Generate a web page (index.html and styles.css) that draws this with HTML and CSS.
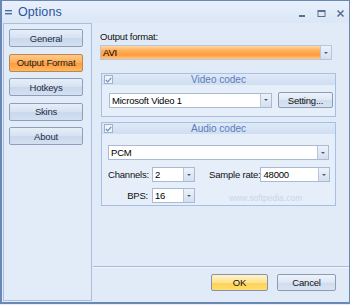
FILE: index.html
```html
<!DOCTYPE html>
<html lang='en'>

<head>
  <meta charset='utf-8'>
  <title>Options</title>
  <link rel="stylesheet" href="styles.css">
</head>

<body>
  <div class="window">
    <div class="titlebar">
      <svg class="sys-icon" width="8" height="7" viewBox="0 0 8 7">
        <rect x="0" y="1" width="7" height="1.4" fill="#4c6da5"/>
        <rect x="0" y="4" width="7" height="1.4" fill="#4c6da5"/>
      </svg>
      <span class="title">Options</span>
      <div class="controls">
        <svg width="9" height="9" viewBox="0 0 9 9"><rect x="1" y="6" width="6" height="2" fill="#5b6f90"/></svg>
        <svg width="9" height="9" viewBox="0 0 9 9"><rect x="1" y="1.5" width="7" height="6" fill="none" stroke="#5b6f90" stroke-width="1"/><rect x="1" y="1" width="7" height="2" fill="#5b6f90"/></svg>
        <svg width="9" height="9" viewBox="0 0 9 9"><path d="M1.5 1.5 L7.5 7.5 M7.5 1.5 L1.5 7.5" stroke="#5b6f90" stroke-width="1.6"/></svg>
      </div>
    </div>
    <div class="main">
      <div class="sidebar">
        <div class="side-btn">General</div>
        <div class="side-btn active">Output Format</div>
        <div class="side-btn">Hotkeys</div>
        <div class="side-btn">Skins</div>
        <div class="side-btn">About</div>
      </div>
      <div class="content">
        <div class="label top-label">Output format:</div>
        <div class="combo combo-orange format-combo">
          <span class="combo-text">AVI</span>
          <span class="drop"><i></i></span>
        </div>

        <div class="group video-group">
          <div class="group-head">
            <span class="check"><svg width="7" height="6" viewBox="0 0 7 6"><path d="M0.8 3 L2.7 4.9 L6.3 0.8" fill="none" stroke="#6f8fbf" stroke-width="1.2"/></svg></span>
            <span>Video codec</span>
          </div>
          <div class="group-body video-body">
            <div class="combo video-combo">
              <span class="combo-text">Microsoft Video 1</span>
              <span class="drop"><i></i></span>
            </div>
            <div class="btn setting-btn">Setting...</div>
          </div>
        </div>

        <div class="group audio-group">
          <div class="group-head">
            <span class="check"><svg width="7" height="6" viewBox="0 0 7 6"><path d="M0.8 3 L2.7 4.9 L6.3 0.8" fill="none" stroke="#6f8fbf" stroke-width="1.2"/></svg></span>
            <span>Audio codec</span>
          </div>
          <div class="group-body audio-body">
            <div class="combo pcm-combo">
              <span class="combo-text">PCM</span>
              <span class="drop"><i></i></span>
            </div>
            <div class="audio-row">
              <span class="label row-label">Channels:</span>
              <div class="combo small-combo">
                <span class="combo-text">2</span>
                <span class="drop"><i></i></span>
              </div>
              <span class="label rate-label">Sample rate:</span>
              <div class="combo rate-combo">
                <span class="combo-text">48000</span>
                <span class="drop"><i></i></span>
              </div>
            </div>
            <div class="audio-row bps-row">
              <span class="label row-label">BPS:</span>
              <div class="combo small-combo">
                <span class="combo-text">16</span>
                <span class="drop"><i></i></span>
              </div>
            </div>
          </div>
          <span class="watermark">www.softpedia.com</span>
        </div>

        <div class="spacer"></div>
        <div class="footer">
          <div class="btn ok-btn">OK</div>
          <div class="btn cancel-btn">Cancel</div>
        </div>
      </div>
    </div>
  </div>
</body>

</html>
```

FILE: styles.css
```css
* {
  margin: 0;
  padding: 0;
  box-sizing: border-box;
}

html,
body {
  width: 350px;
  height: 305px;
  background-color: #e6eef9;
  font-family: "Liberation Sans", Arial, sans-serif;
  font-size: 9.5px;
  color: #000;
  overflow: hidden;
}

.window {
  width: 350px;
  height: 304px;
  border: 1px solid #6a88b6;
  border-left-width: 2px;
  border-bottom-width: 2px;
  background-color: #e1ebf8;
  display: flex;
  flex-direction: column;
}

.titlebar {
  height: 22px;
  display: flex;
  align-items: center;
  padding-left: 3px;
  background: linear-gradient(#e8f0fb, #dbe7f6);
}

.sys-icon {
  margin-top: 1px;
}

.title {
  margin-left: 5px;
  font-size: 12.5px;
  color: #2b54a0;
  letter-spacing: 0.1px;
}

.controls {
  margin-left: auto;
  display: flex;
  gap: 10px;
  padding-right: 4px;
  margin-top: 2px;
}

.main {
  flex: 1;
  display: flex;
}

.sidebar {
  width: 89px;
  margin-left: 1px;
  margin-bottom: 1px;
  border: 1px solid #a9bfdd;
  background-color: #e2ecf9;
  padding: 5px 0 0 5px;
  display: flex;
  flex-direction: column;
  gap: 6.5px;
}

.side-btn {
  width: 74px;
  height: 18px;
  border: 1px solid #8d9fbb;
  border-radius: 2px;
  background: linear-gradient(#e7eef8, #d6e2f2 50%, #c9d8ec 51%, #d3e0f1);
  display: flex;
  align-items: center;
  justify-content: center;
  color: #1d2b44;
  letter-spacing: -0.2px;
  white-space: nowrap;
}

.side-btn.active {
  border-color: #b98a4e;
  background: linear-gradient(#ffc98a, #ffac55 50%, #ff9a38 51%, #ffb865);
  color: #202020;
}

.content {
  flex: 1;
  display: flex;
  flex-direction: column;
  padding: 0 0 0 8px;
}

.label {
  color: #111;
  letter-spacing: -0.2px;
  white-space: nowrap;
  flex-shrink: 0;
}

.top-label {
  margin-top: 8px;
  line-height: 12px;
}

.combo {
  height: 15px;
  border: 1px solid #a9bad3;
  background-color: #fff;
  display: flex;
  align-items: center;
  padding-left: 2px;
  letter-spacing: -0.2px;
  flex-shrink: 0;
}

.combo-text {
  flex: 1;
  white-space: nowrap;
}

.drop {
  width: 11px;
  height: 13px;
  border-left: 1px solid #b8c7dc;
  background: linear-gradient(#edf2fa, #d4dfee);
  display: flex;
  align-items: center;
  justify-content: center;
}

.drop i {
  width: 0;
  height: 0;
  border-left: 2.5px solid transparent;
  border-right: 2.5px solid transparent;
  border-top: 2.5px solid #4b5d7c;
}

.format-combo {
  margin-top: 2px;
  width: 232px;
  height: 15px;
}

.combo-orange {
  background: linear-gradient(#ffd8a6, #ffae5c 35%, #ff9c3c 70%, #ffc68a);
  border-color: #b9c6d8;
}

.group {
  position: relative;
  width: 235px;
  margin-left: 1px;
  border: 1px solid #a6bfe2;
  background-color: #e6eefa;
}

.video-group {
  margin-top: 13px;
  height: 44px;
}

.audio-group {
  margin-top: 5px;
  height: 84px;
}

.group-head {
  height: 11px;
  display: flex;
  align-items: center;
  justify-content: center;
  position: relative;
  background: linear-gradient(#dfe9f7, #cfdef2);
  color: #5a7cba;
  font-size: 10px;
}

.check {
  position: absolute;
  left: 2px;
  top: 1px;
  width: 9px;
  height: 9px;
  border: 1px solid #9fb3d0;
  background-color: #eef3fa;
  display: flex;
  align-items: center;
  justify-content: center;
}

.video-body {
  display: flex;
  align-items: center;
  padding: 7px 0 0 7px;
}

.video-combo {
  width: 163px;
}

.btn {
  height: 16px;
  border: 1px solid #8d9cb4;
  border-radius: 2px;
  background: linear-gradient(#eef3fa, #dde7f4 50%, #cfdcee 51%, #d9e4f2);
  display: flex;
  align-items: center;
  justify-content: center;
  letter-spacing: -0.2px;
  color: #111;
}

.setting-btn {
  width: 55px;
  margin-left: 6px;
}

.audio-body {
  padding: 11px 6px 0 6px;
}

.pcm-combo {
  width: 221px;
}

.audio-row {
  display: flex;
  align-items: center;
  margin-top: 7px;
}

.bps-row {
  margin-top: 6px;
}

.row-label {
  width: 40px;
  text-align: right;
}

.small-combo {
  width: 43px;
  margin-left: 4px;
}

.rate-label {
  margin-left: 14px;
}

.rate-combo {
  width: 70px;
  margin-left: auto;
}

.watermark {
  position: absolute;
  left: 127px;
  top: 70px;
  color: #c9d5e6;
  font-size: 8.5px;
}

.spacer {
  flex: 1;
}

.footer {
  border-top: 1px solid #a7bcdc;
  box-shadow: inset 0 1px 0 #f2f6fc;
  margin-left: -7px;
  height: 36px;
  display: flex;
  justify-content: flex-end;
  padding: 7px 13px 0 0;
  gap: 9px;
}

.ok-btn {
  width: 57px;
  height: 17px;
  border-color: #8592a8;
  background: linear-gradient(#fff3cf, #ffe28e 50%, #ffd24f 51%, #ffdd72);
}

.cancel-btn {
  width: 59px;
  height: 17px;
}
```
